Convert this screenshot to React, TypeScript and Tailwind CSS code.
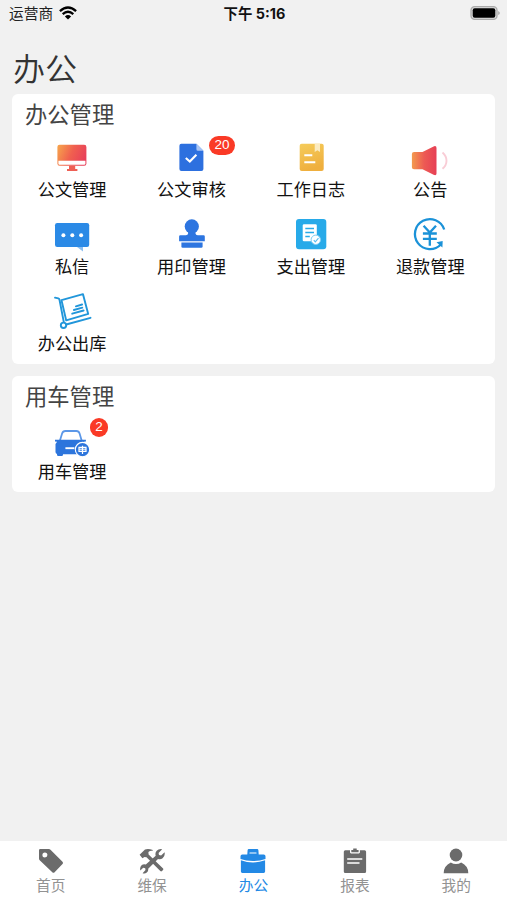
import type { ReactNode } from 'react'

type Entry = {
  label: string
  icon: ReactNode
  badge?: number
}

function AppIcon({ children }: { children: ReactNode }) {
  return (
    <svg viewBox="0 0 40 40" className="w-10 h-10 overflow-visible" fill="none">
      {children}
    </svg>
  )
}

const officeEntries: Entry[] = [
  {
    label: '公文管理',
    icon: (
      <AppIcon>
        <defs>
          <linearGradient id="screen" x1="0" y1="0.2" x2="1" y2="0.5">
            <stop offset="0" stopColor="#f6a04c" />
            <stop offset="0.5" stopColor="#f0604f" />
            <stop offset="1" stopColor="#e8405a" />
          </linearGradient>
        </defs>
        <rect x="5.4" y="7.7" width="29" height="21" rx="2.2" fill="url(#screen)" />
        <path d="M6.4 23.8h27v2.7a1.2 1.2 0 0 1-1.2 1.2H7.6a1.2 1.2 0 0 1-1.2-1.2z" fill="#fff" />
        <path d="M17 28.7h6.2v3.2h2.2V34H15v-2.1h2z" fill="#ee6055" />
      </AppIcon>
    ),
  },
  {
    label: '公文审核',
    badge: 20,
    icon: (
      <AppIcon>
        <path d="M10.4 6.7h15l7 7V32a2 2 0 0 1-2 2h-20a2 2 0 0 1-2-2V8.7a2 2 0 0 1 2-2z" fill="#2d70df" />
        <path d="M25.4 6.7l7 7h-5.5a1.5 1.5 0 0 1-1.5-1.5z" fill="#a9c5f4" />
        <path d="M14.8 21l4 3.5 6.6-6.8" stroke="#fff" strokeWidth="2.1" />
      </AppIcon>
    ),
  },
  {
    label: '工作日志',
    icon: (
      <AppIcon>
        <defs>
          <linearGradient id="journal" x1="0" y1="0" x2="0.3" y2="1">
            <stop offset="0" stopColor="#f5cc5b" />
            <stop offset="1" stopColor="#efaf3e" />
          </linearGradient>
        </defs>
        <rect x="8.7" y="6.7" width="24" height="27.3" rx="2" fill="url(#journal)" />
        <path d="M23.7 6.7H29V15l-2.6-1.8-2.7 1.8z" fill="#fbebc0" />
        <path d="M13.3 18.3h8M13.3 25.3h11" stroke="#fff" strokeWidth="2" />
      </AppIcon>
    ),
  },
  {
    label: '公告',
    icon: (
      <AppIcon>
        <defs>
          <linearGradient id="horn" x1="0" y1="0" x2="1" y2="0">
            <stop offset="0" stopColor="#f39a4e" />
            <stop offset="0.5" stopColor="#ed5a54" />
            <stop offset="1" stopColor="#e63f55" />
          </linearGradient>
        </defs>
        <path
          d="M4 15h8.5L23.6 9.4q2.9-1 2.9 1.6v25.4q0 2.6-2.9 1.4L12.5 32.3H4q-2.1 0-2.1-2.1V17.1Q1.9 15 4 15z"
          fill="url(#horn)"
        />
        <path d="M32.5 15.5q4 3.500 4 8.200t-4 8" stroke="#f9cdd6" strokeWidth="1.9" />
      </AppIcon>
    ),
  },
  {
    label: '私信',
    icon: (
      <AppIcon>
        <path d="M23.7 32H31v5.6z" fill="#8cbff1" />
        <rect x="3" y="9" width="34.2" height="24" rx="2.2" fill="#2b8ae6" />
        <g fill="#fff">
          <circle cx="11.4" cy="21.3" r="2" />
          <circle cx="20.3" cy="21.3" r="2" />
          <circle cx="29.1" cy="21.3" r="2" />
        </g>
      </AppIcon>
    ),
  },
  {
    label: '用印管理',
    icon: (
      <AppIcon>
        <g fill="#2d75e0">
          <circle cx="20.8" cy="12.4" r="7.1" />
          <path d="M17.1 17h7.4v2.5q.2 1.8 2.2 1.8h5.9q1.2 0 1.2 1.2v4.8H8.100v-4.8q0-1.2 1.2-1.2h5.6q2-.2 2.2-1.8z" />
          <path d="M10.4 28.4h21.2v4q0 1.3-1.3 1.3H11.7q-1.3 0-1.3-1.3z" />
        </g>
      </AppIcon>
    ),
  },
  {
    label: '支出管理',
    icon: (
      <AppIcon>
        <rect x="5" y="5" width="30.3" height="30.2" rx="3" fill="#27aae9" />
        <path
          d="M13 10.3h11.5a1.3 1.3 0 0 1 1.3 1.3v15.7H13a1.3 1.3 0 0 1-1.3-1.3V11.6a1.3 1.3 0 0 1 1.3-1.3z"
          fill="#fff"
        />
        <path d="M14.3 14.4H23M14.3 18.4H23M14.3 22.4h4.5" stroke="#27aae9" strokeWidth="1.5" />
        <circle cx="24.8" cy="25.8" r="4.7" fill="#fff" stroke="#7fcdf3" />
        <path d="M22.8 26.2l1.5 1.6 3.2-3.6" stroke="#5bbdf0" strokeWidth="1.2" />
      </AppIcon>
    ),
  },
  {
    label: '退款管理',
    icon: (
      <AppIcon>
        <g stroke="#1b92d8" strokeWidth="2.3">
          <path d="M34.2 15.5A15 15 0 1 0 30.8 30.5" />
          <path d="M13.6 11.7l6.2 6.800 6.200-6.800M12.9 19.5h13.9M12.9 24.800h13.9M19.8 18.5v13.2" />
        </g>
        <path d="M26.5 28.3l6.2-1.2-.3 6.5z" fill="#1b92d8" />
      </AppIcon>
    ),
  },
  {
    label: '办公出库',
    icon: (
      <AppIcon>
        <g stroke="#2196da" strokeWidth="1.9" strokeLinecap="round" strokeLinejoin="round">
          <path d="M3 6.6l3.3.8q1 .3 1.2 1.3l4.3 22.4M14.2 33.5l24.3-6.7" />
          <circle cx="11.500" cy="34.3" r="2.7" />
          <path d="M9.5 9.2l21.5-6 5.2 19.7-22 6.5z" />
          <path d="M23.9 15.3l6.2-1.8M21.9 19l8.4-2.3M20.2 22.7l11.4-3.2" />
        </g>
      </AppIcon>
    ),
  },
]

const carEntries: Entry[] = [
  {
    label: '用车管理',
    badge: 2,
    icon: (
      <AppIcon>
        <path
          d="M7.8 22l2.3-7.5Q10.9 12 13.4 12h11q2.400 0 3.200 2.500L29.8 22"
          stroke="#5b97e8"
          strokeWidth="1.8"
        />
        <path
          d="M3 20.8h30.9v1.7l-2.2.3 1.6 2.2v10.2H11v.6q0 1.3-1.3 1.3H6.3Q5 37.1 5 35.8v-.9q-1.5-.3-1.5-1.8v-8l1.6-2.3-2.1-.3z"
          fill="#2d75dc"
        />
        <path d="M13.4 29.2h9" stroke="#fff" strokeWidth="1.9" />
        <circle cx="30.5" cy="30.6" r="7.2" fill="#2d75dc" stroke="#fff" strokeWidth="1.1" />
        <path d="M27 28.3h7v4h-7zM30.5 26.7v8.2" stroke="#fff" strokeWidth="1.2" />
        <path d="M27 30.2h7" stroke="#fff" />
      </AppIcon>
    ),
  },
]

const tabs = [
  {
    label: '首页',
    icon: (
      <path
        fillRule="evenodd"
        d="M2.300 1h8.500q1 0 1.700.7l12 12q1.200 1.200 0 2.300l-7.900 8.200q-1.100 1.200-2.300 0L1.700 12.300Q1 11.600 1 10.600V2.300Q1 1 2.300 1zM6.900 4.500a2.500 2.500 0 1 0 0 5 2.500 2.500 0 0 0 0-5z"
      />
    ),
  },
  {
    label: '维保',
    icon: (
      <>
        <path d="M.6 6.8L6 1.5q3-1.3 7.8.4l.2.6q-3.700 0-4.600 1.600l.2 2.400 14.500 13.900q.7.900-.1 1.700l-1 1q-.9.700-1.700-.1L7.500 9.300 5.500 9 3.400 10.300z" />
        <path d="M23.200 1.200l-3.600 3.700.4 2.200 2.100.5 3.500-3.300q.7 4-2 6-2.200 1.500-4.600.6L9.200 20.700q.4 2.300-1.400 3.900-1.700 1.400-4.200.7L6.500 22l-.3-1.800-2-.5-2.900 2.800q-.8-3.500 1.500-5.400 1.800-1.300 4-.6l9.900-8.700q-.9-2.800 1-5 2-2.200 5.500-1.600z" />
      </>
    ),
  },
  {
    label: '办公',
    active: true,
    icon: (
      <path
        fillRule="evenodd"
        d="M8.900 1h8.200q1.200 0 1.300 1.200l.3 4.300h5q1.800 0 1.800 1.800v2.600Q20 12.900 13 12.900T.5 10.900V8.300q0-1.800 1.800-1.800h5l.3-4.300Q7.700 1 8.900 1zM9.600 4.400l-.2 1.200h7.200l-.2-1.200zM.9 12.300Q7 14.500 13 14.500t12.100-2.200v11.300q0 1.400-1.400 1.400H2.300Q.9 25 .9 23.600z"
      />
    ),
  },
  {
    label: '报表',
    icon: (
      <path
        fillRule="evenodd"
        d="M3.300 2.200H8v2.100q0 1.100 1.100 1.100h7.700q1.100 0 1.100-1.100V2.200h4.700q1.500 0 1.500 1.500v19.800q0 1.500-1.500 1.500H3.300q-1.500 0-1.500-1.500V3.700q0-1.500 1.500-1.500zM9.300 2h1.900V.6h3.500V2h1.900v2.200H9.300zM5.200 10.300v1.500h15.100v-1.500zM5.200 14.300v1.500h12.300v-1.500z"
      />
    ),
  },
  {
    label: '我的',
    icon: (
      <>
        <ellipse cx="13" cy="7" rx="6.3" ry="6.5" />
        <path d="M.7 25.200q0-7.200 7.100-10.600 2.300 1.500 5.200 1.500t5.200-1.500q7.100 3.400 7.100 10.600z" />
      </>
    ),
  },
]

function StatusBar() {
  return (
    <header className="grid grid-cols-3 items-center h-7 pl-[9px] pr-[7px] text-black">
      <div className="flex items-center gap-[6px] text-[14.7px] leading-5 text-[#222]">
        运营商
        <svg viewBox="0 0 18 14" className="w-[18px] h-[14px] -mt-0.5" fill="none">
          <path d="M.9 5.1Q9-2.2 17.1 5.1M3.7 8.2Q9 3.4 14.3 8.2" stroke="#000" strokeWidth="2.3" />
          <path d="M5.9 10.4Q9 7.8 12.1 10.4L9 13.6z" fill="#000" />
        </svg>
      </div>
      <div className="text-center text-[14.4px] leading-5 font-bold text-[#111] whitespace-nowrap">下午 5:16</div>
      <svg viewBox="0 0 30 14" className="w-[30px] h-[14px] -mt-0.5 justify-self-end" fill="none">
        <rect x="1" y=".7" width="26" height="12.6" rx="3.6" fill="#ddd" stroke="#aaa" strokeWidth="1.3" />
        <rect x="2.7" y="2.3" width="22.6" height="9.4" rx="2" fill="#000" />
        <path d="M28.2 4.9q1.6.7 1.6 2.1t-1.600 2.100z" fill="#aaa" />
      </svg>
    </header>
  )
}

function Section({ title, entries }: { title: string; entries: Entry[] }) {
  return (
    <section className="bg-white rounded-md pb-[10px]">
      <h2 className="h-[43px] pl-[13px] pt-[5px] text-[22.3px] leading-8 text-[#444]">{title}</h2>
      <div className="grid grid-cols-[repeat(4,119.4px)] gap-y-[14px] pl-[0.4px]">
        {entries.map((entry) => (
          <button key={entry.label} className="flex flex-col items-center gap-[3px]">
            <span className="relative h-10 w-10">
              {entry.icon}
              {entry.badge && (
                <span className="absolute left-[38px] -top-px min-w-[18px] h-[18.5px] px-[5px] rounded-full bg-[#fa3a26] text-white font-['Liberation_Sans',sans-serif] text-[13.5px] leading-[18.5px] text-center">
                  {entry.badge}
                </span>
              )}
            </span>
            <span className="text-[17.2px] leading-5 text-[#111]">{entry.label}</span>
          </button>
        ))}
      </div>
    </section>
  )
}

export default function App() {
  return (
    <div className="flex flex-col w-full h-screen bg-[#f1f1f1] font-['Inter','Noto_Sans_CJK_SC',sans-serif]">
      <StatusBar />
      <h1 className="h-[66px] pl-[13px] pt-[18px] text-[32px] leading-[48px] font-[350] text-[#333]">办公</h1>

      <main className="flex-1 flex flex-col gap-3 px-3">
        <Section title="办公管理" entries={officeEntries} />
        <Section title="用车管理" entries={carEntries} />
      </main>

      {/* Bottom tabs */}
      <nav className="grid grid-cols-5 h-[59px] bg-white pt-[7px]">
        {tabs.map((tab) => (
          <button
            key={tab.label}
            className={`flex flex-col items-center gap-px ${tab.active ? 'text-[#2389e5]' : 'text-[#929292]'}`}
          >
            <svg
              viewBox="0 0 26 26"
              className={`w-[26px] h-[26px] ${tab.active ? 'fill-[#2389e5]' : 'fill-[#6b6b6b]'}`}
            >
              {tab.icon}
            </svg>
            <span className="text-[14.7px] leading-[22px]">{tab.label}</span>
          </button>
        ))}
      </nav>
    </div>
  )
}
